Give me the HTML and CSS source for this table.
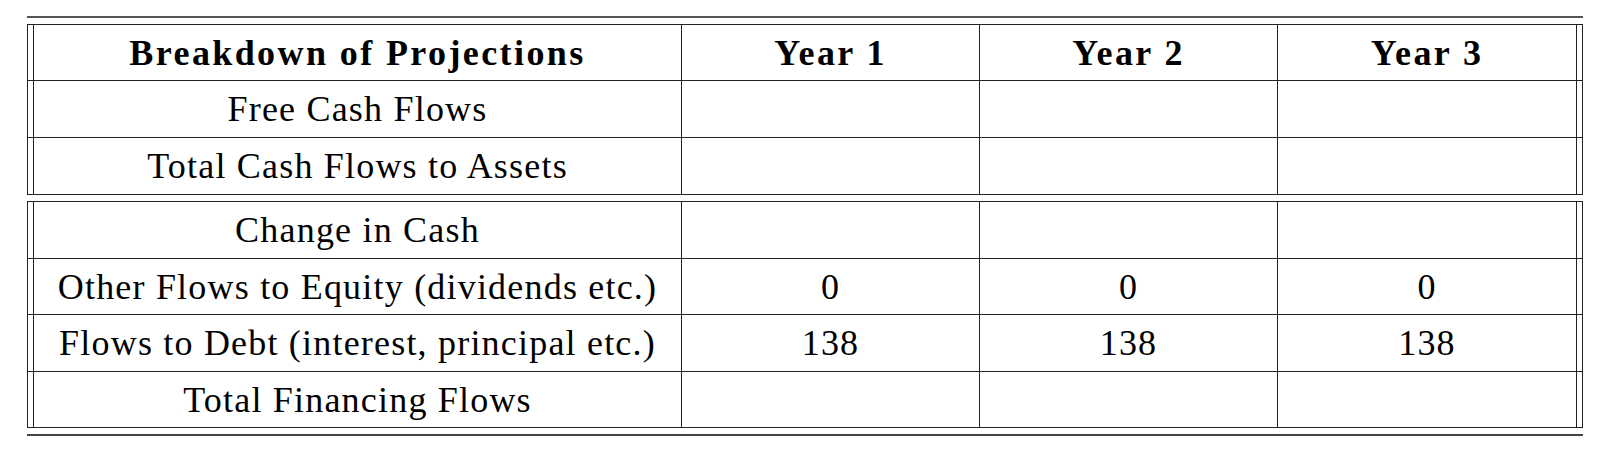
FILE: index.html
```html
<!DOCTYPE html>
<html lang="en">
<head>
    <meta charset="UTF-8">
    <meta name="viewport" content="width=device-width, initial-scale=1.0">
    <title>Breakdown of Projections</title>
    <link rel="stylesheet" href="styles.css">
</head>
<body>
    <div class="sheet">
        <div class="rule"></div>
        <table class="block">
            <tr class="head">
                <td class="gap"></td>
                <th class="label">Breakdown of Projections</th>
                <th class="year">Year 1</th>
                <th class="year">Year 2</th>
                <th class="year last">Year 3</th>
                <td class="gap"></td>
            </tr>
            <tr class="tall">
                <td class="gap"></td>
                <td>Free Cash Flows</td>
                <td></td>
                <td></td>
                <td></td>
                <td class="gap"></td>
            </tr>
            <tr class="tall">
                <td class="gap"></td>
                <td>Total Cash Flows to Assets</td>
                <td></td>
                <td></td>
                <td></td>
                <td class="gap"></td>
            </tr>
        </table>
        <table class="block">
            <tr class="tall">
                <td class="gap"></td>
                <td class="label">Change in Cash</td>
                <td class="year"></td>
                <td class="year"></td>
                <td class="year last"></td>
                <td class="gap"></td>
            </tr>
            <tr class="short">
                <td class="gap"></td>
                <td>Other Flows to Equity (dividends etc.)</td>
                <td>0</td>
                <td>0</td>
                <td>0</td>
                <td class="gap"></td>
            </tr>
            <tr class="tall">
                <td class="gap"></td>
                <td>Flows to Debt (interest, principal etc.)</td>
                <td>138</td>
                <td>138</td>
                <td>138</td>
                <td class="gap"></td>
            </tr>
            <tr class="short">
                <td class="gap"></td>
                <td>Total Financing Flows</td>
                <td></td>
                <td></td>
                <td></td>
                <td class="gap"></td>
            </tr>
        </table>
        <div class="rule bottom"></div>
    </div>
</body>
</html>
```

FILE: styles.css
```css
body {
    margin: 0;
    background: #fff;
    color: #000;
    font-family: "Liberation Serif", "Times New Roman", serif;
}

.sheet {
    width: 1556px;
    padding-top: 16px;
    margin-left: 27px;
}

.rule {
    height: 2px;
    background: #555;
}

.rule.bottom {
    margin-top: 6px;
    background: #444;
}

.block {
    width: 1556px;
    margin-top: 6px;
    border-collapse: separate;
    border-spacing: 0;
    table-layout: fixed;
    border-top: 1px solid #222;
    border-left: 1px solid #222;
}

.block td,
.block th {
    box-sizing: border-box;
    padding: 0;
    border-right: 1px solid #222;
    border-bottom: 1px solid #222;
    text-align: center;
    vertical-align: middle;
    font-size: 36px;
    letter-spacing: 1.2px;
    white-space: nowrap;
}

.block th {
    font-weight: bold;
    letter-spacing: 2.4px;
}

.block .gap {
    width: 6px;
}

.block .label {
    width: 648px;
}

.block .year {
    width: 298px;
}

.block .year.last {
    width: 299px;
}

.head td,
.head th {
    height: 56px;
}

.tall td {
    height: 57px;
}

.short td {
    height: 56px;
}
```
